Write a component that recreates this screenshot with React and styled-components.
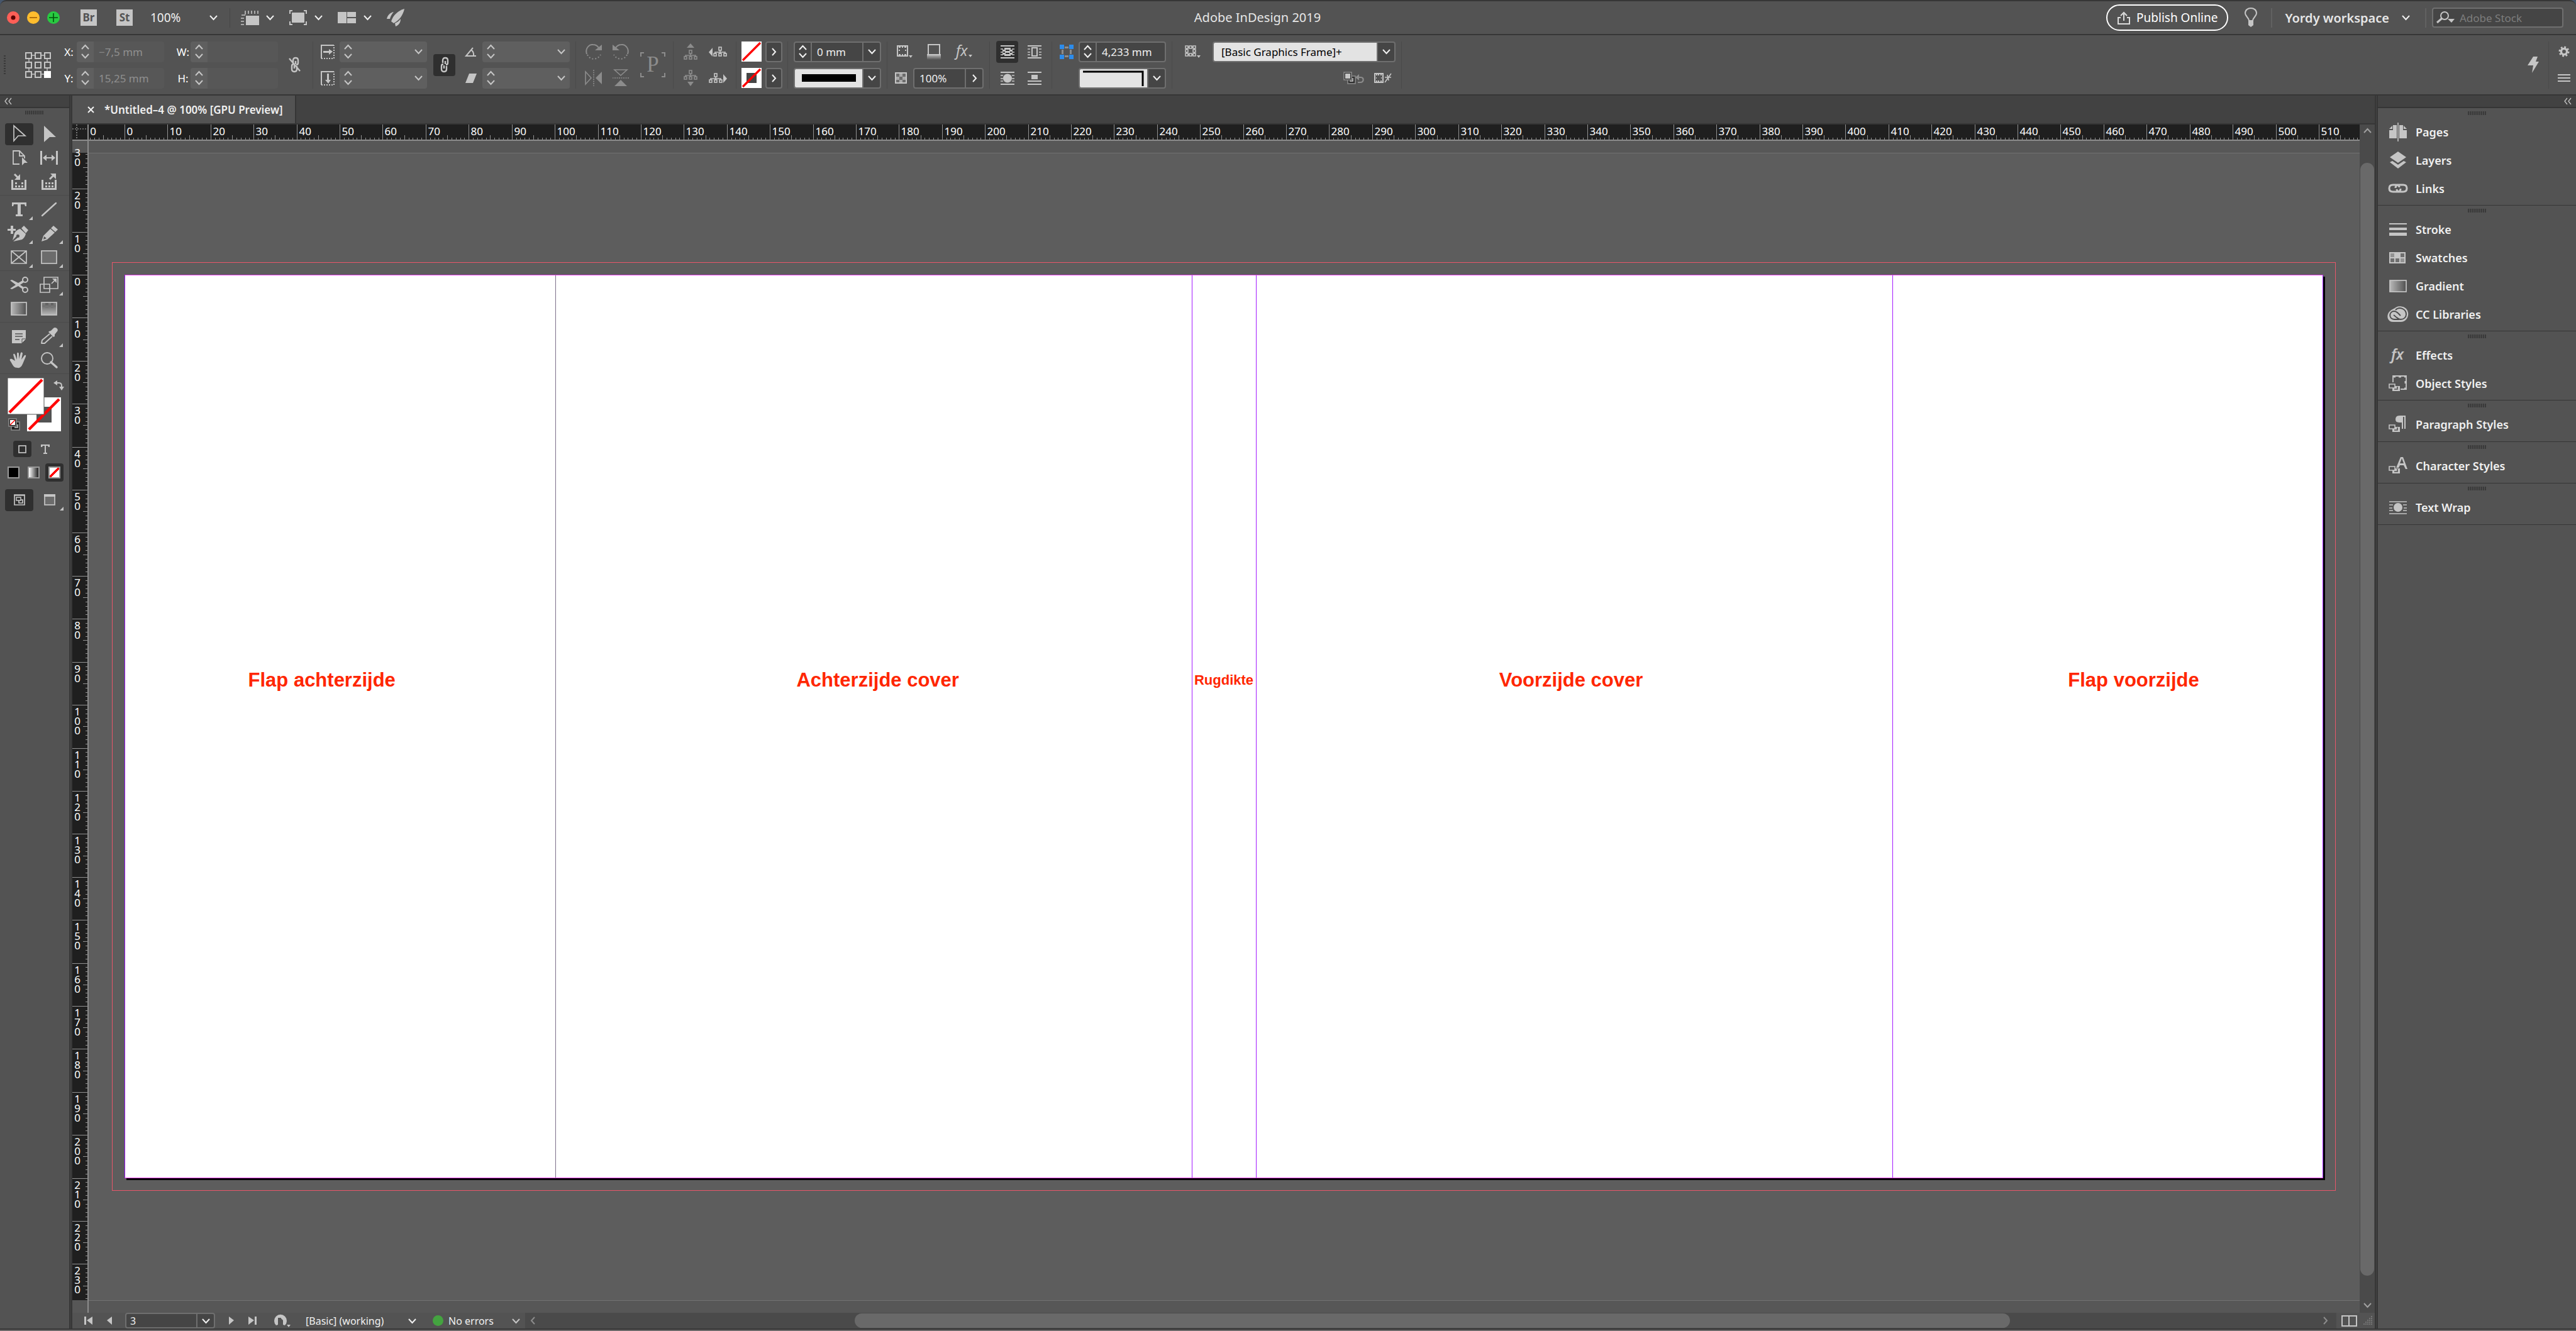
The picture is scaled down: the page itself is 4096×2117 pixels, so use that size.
import styled, { createGlobalStyle, css } from 'styled-components';

const PX_PER_MM = 6.841;
const ICON = '#c5c5c5';
const MUTED = '#8c8c8c';

const GlobalStyle = createGlobalStyle`
   * {
      box-sizing: border-box;
   }

   body {
      margin: 0;
      background: #46566b;
      color: #f0f0f0;
      font-family: 'Noto Sans', 'Open Sans', sans-serif;
      font-size: 17px;
   }

   button,
   input,
   select {
      margin: 0;
      padding: 0;
      border: 0;
      background: none;
      color: inherit;
      font: inherit;
      outline: none;
      appearance: none;
   }

   svg {
      display: block;
      flex: none;
      overflow: visible;
   }
`;

// Icons
const Icon = ({ w, h, color = ICON, children }) => (
   <svg width={w} height={h} viewBox={`0 0 ${w} ${h}`} fill={color} aria-hidden="true">
      {children}
   </svg>
);

const Chevron = ({ dir = 'down', color = '#f0f0f0' }) => {
   const paths = {
      down: 'M1 1 L6.5 7 L12 1',
      up: 'M1 7 L6.5 1 L12 7',
      right: 'M4 0 L9 5.5 L4 11',
      left: 'M9 0 L4 5.5 L9 11',
   };
   const tall = dir === 'left' || dir === 'right';
   return (
      <svg
         width="13"
         height={tall ? 11 : 8}
         viewBox={`0 0 13 ${tall ? 11 : 8}`}
         fill="none"
         stroke={color}
         strokeWidth="2"
         aria-hidden="true"
      >
         <path d={paths[dir]} />
      </svg>
   );
};

const Collapse = () => (
   <Icon w={12} h={12}>
      <path d="M5 1 L1 6 L5 11 M11 1 L7 6 L11 11" fill="none" stroke={ICON} strokeWidth="1.3" />
   </Icon>
);

const RulerViewIcon = () => (
   <Icon w={30} h={24}>
      <rect x="9" y="9" width="21" height="15" />
      <path d="M8 1v6M13 1v5M18 1v5M23 1v5M28 1v5M2 8h6M1 13h5M1 18h5M1 23h5" stroke={ICON} strokeWidth="1.6" />
   </Icon>
);

const ScreenModeIcon = () => (
   <Icon w={28} h={24}>
      <rect x="4" y="4" width="20" height="16" />
      <path d="M1 6V1h4M23 1h4v5M27 18v5h-4M5 23H1v-5" fill="none" stroke={ICON} strokeWidth="2" />
   </Icon>
);

const ArrangeIcon = () => (
   <Icon w={29} h={18}>
      <path d="M0 0h14v18H0zM15 0h14v8H15zM15 10h14v8H15z" />
   </Icon>
);

const RocketIcon = () => (
   <Icon w={28} h={28}>
      <path d="M28 0C18 3 10 10 7 20l4 3C20 18 26 10 28 0z" />
      <path d="M11 5C5 6 1 11 0 16h5c1-4 3-8 6-11zM22 16c0 6-3 10-8 12l-1-5c4-2 7-4 9-7z" />
   </Icon>
);

const ShareIcon = () => (
   <Icon w={20} h={21}>
      <path d="M5 10H1v10h18V10h-4" fill="none" stroke="#dcdcdc" strokeWidth="2" />
      <path d="M10 15V4M5 7l5-5 5 5" fill="none" stroke="#dcdcdc" strokeWidth="2" />
   </Icon>
);

const BulbIcon = () => (
   <Icon w={22} h={32}>
      <path d="M8 21c0-5-6-7-6-12C2 4 6 1 11 1s9 3 9 8c0 5-6 7-6 12z" fill="none" stroke={ICON} strokeWidth="2" />
      <path d="M7 21h8v7l-4 3-4-3z" />
   </Icon>
);

const SearchIcon = () => (
   <Icon w={30} h={20}>
      <circle cx="13" cy="7" r="6" fill="none" stroke={ICON} strokeWidth="2" />
      <path d="M9 11L1 18" stroke={ICON} strokeWidth="3" />
      <path d="M18 12h11l-5 6z" />
   </Icon>
);

const RefPointIcon = () => (
   <Icon w={41} h={41}>
      <path d="M6 5h29M6 35h29M6 5v30M35 5v30" stroke={ICON} strokeWidth="1.4" />
      {[0, 15, 30].map((y) =>
         [0, 15, 30].map((x) => (
            <rect
               key={`${x}-${y}`}
               x={x + 1}
               y={y + 1}
               width="9"
               height="9"
               fill={x === 30 && y === 30 ? '#fff' : '#535353'}
               stroke={x === 30 && y === 30 ? '#fff' : ICON}
               strokeWidth="2"
            />
         ))
      )}
   </Icon>
);

const LinkIcon = ({ broken }) => (
   <Icon w={20} h={24}>
      <g fill="none" stroke={ICON} strokeWidth="2.4">
         <path d="M7 9V5q0-4 4-4t4 4v4q0 3-3 3M13 14v5q0 4-4 4t-4-4v-5q0-3 3-3" />
         <path d="M11 6v5M9 13v5" />
         {broken && <path d="M1 2l17 20" />}
      </g>
   </Icon>
);

const ScaleIcon = ({ vertical }) => (
   <Icon w={22} h={23}>
      <path d="M21 1H1v21" fill="none" stroke={ICON} strokeWidth="2" />
      <path d="M1 22h20V1" fill="none" stroke={ICON} strokeWidth="2" strokeDasharray="2 2" />
      {vertical ? (
         <path d="M10 4h3v10h3l-4 6-5-6h3z" />
      ) : (
         <path d="M4 10v3h9v3l6-5-6-4v3z" />
      )}
   </Icon>
);

const AngleIcon = () => (
   <Icon w={19} h={15}>
      <path d="M13 1L2 14h16M10 4q5 4 4 10" fill="none" stroke={ICON} strokeWidth="2" />
   </Icon>
);

const ShearIcon = () => (
   <Icon w={19} h={15}>
      <path d="M7 0h12l-6 15H1z" />
   </Icon>
);

const RotateIcon = ({ ccw }) => (
   <Icon w={26} h={26} color={MUTED}>
      <g transform={ccw ? 'translate(26 0) scale(-1 1)' : undefined}>
         <path d="M2 17C-1 8 6 1 12 2c4 0 7 2 9 5" fill="none" stroke={MUTED} strokeWidth="2" />
         <path d="M26 2v9H15z" />
         <path d="M3 18c4 9 16 9 21 0" fill="none" stroke={MUTED} strokeWidth="2" strokeDasharray="2 3" />
      </g>
   </Icon>
);

const FlipIcon = ({ vertical }) => (
   <Icon w={28} h={28} color={MUTED}>
      <g transform={vertical ? 'rotate(90 14 14)' : undefined}>
         <path d="M1 4v20l9-10z" fill="none" stroke={MUTED} strokeWidth="1.6" />
         <path d="M27 4v20L17 14z" />
         <path d="M14 1v26" stroke={MUTED} strokeWidth="1.6" strokeDasharray="2 1.5" />
      </g>
   </Icon>
);

const FrameLetterIcon = () => (
   <Icon w={40} h={40} color={MUTED}>
      <path d="M1 7V1h5M34 1h5v6M39 33v6h-5M6 39H1v-6" fill="none" stroke={MUTED} strokeWidth="2" />
      <text x="20" y="31" textAnchor="middle" fontFamily="Liberation Serif, serif" fontSize="35">
         P
      </text>
   </Icon>
);

const TreeShape = ({ x = 0, y = 0, color }) => (
   <g transform={`translate(${x} ${y})`} fill="none" stroke={color} strokeWidth="1.6">
      <rect x="9" y="1" width="4" height="5" />
      <path d="M11 6v6M3 12V9h16v3" />
      <rect x="1" y="11" width="4" height="4" />
      <rect x="9" y="11" width="4" height="4" />
      <rect x="17" y="11" width="4" height="4" />
   </g>
);

const SelectContentIcon = ({ dir }) => {
   if (dir === 'up' || dir === 'down') {
      const up = dir === 'up';
      return (
         <Icon w={22} h={26} color={MUTED}>
            <TreeShape y={up ? 10 : 0} color={MUTED} />
            <path d={up ? 'M11 0l6 7H5z' : 'M11 26l5-7H6z'} />
         </Icon>
      );
   }
   const left = dir === 'left';
   return (
      <Icon w={29} h={17}>
         <TreeShape x={left ? 7 : 0} color={ICON} />
         <path d={left ? 'M0 9l6-7v14z' : 'M29 9l-6-7v14z'} />
      </Icon>
   );
};

const NoneSwatch = ({ size, hollow }) => (
   <Icon w={size} h={size} color="#fff">
      <rect width={size} height={size} />
      {hollow && <rect x="25%" y="25%" width="50%" height="50%" fill="#454545" />}
      <path d={`M2 ${size - 2}L${size - 2} 2`} stroke="#f00" strokeWidth="3.4" />
   </Icon>
);

const FrameIcon = () => (
   <Icon w={25} h={20}>
      <rect x="1" y="1" width="16" height="16" fill="none" stroke={ICON} strokeWidth="2" />
      <path d="M3 3h3M12 3h3M3 15h3M12 15h3M3 8h2M13 8h2M8 3h2M8 15h2" stroke={ICON} strokeWidth="2" />
      <path d="M19 16h6l-3 4z" />
   </Icon>
);

const ShadowIcon = () => (
   <Icon w={24} h={25}>
      <defs>
         <linearGradient id="shade" x1="0" y1="0" x2="0" y2="1">
            <stop offset="0" stopColor="#c5c5c5" />
            <stop offset="1" stopColor="#535353" />
         </linearGradient>
      </defs>
      <rect x="1" y="16" width="22" height="9" fill="url(#shade)" />
      <rect x="3" y="1" width="18" height="16" fill="#535353" stroke={ICON} strokeWidth="2" />
   </Icon>
);

const FxIcon = ({ menu }) => (
   <Icon w={28} h={26}>
      <text x="1" y="20" fontStyle="italic" fontSize="23" fontFamily="Noto Sans, sans-serif">
         fx
      </text>
      {menu && <path d="M21 18h6l-3 4z" />}
   </Icon>
);

const OpacityIcon = () => (
   <Icon w={19} h={18}>
      <rect x="1" y="1" width="17" height="16" fill="#6c6c6c" stroke={ICON} strokeWidth="2" />
      <path d="M7 2h5v5H7zM2 7h5v5H2zM12 7h5v5h-5zM7 12h5v4H7z" fill="#a9a9a9" />
   </Icon>
);

const WrapIcon = ({ kind }) => (
   <Icon w={28} h={21}>
      <path d="M3 1h22M3 20h22" stroke={ICON} strokeWidth="2" />
      {kind !== 'jump' && <path d="M3 6h4M21 6h4M3 11h4M21 11h4M3 15h4M21 15h4" stroke={ICON} strokeWidth="1.6" />}
      {kind === 'none' && <path d="M9 4h10v3H9zM6 7h5v3H6zM17 7h5v3h-5zM10 9h8v3h-8zM6 12h5v3H6zM17 12h5v3h-5zM9 14h10v3H9z" />}
      {kind === 'box' && <rect x="10" y="4" width="8" height="13" fill="none" stroke={ICON} strokeWidth="2" />}
      {kind === 'shape' && <ellipse cx="14" cy="10.5" rx="7" ry="7" />}
      {kind === 'jump' && <path d="M9 5h10v7H9zM3 14h22v2H3z" />}
   </Icon>
);

const CornerOptionsIcon = () => (
   <Icon w={22} h={23}>
      <path d="M8 3h6v3H8zM8 17h6v3H8zM3 8h3v7H3zM16 8h3v7h-3z" fill={MUTED} />
      <path d="M0 0h7v7H0zM15 0h7v7h-7zM0 16h7v7H0zM15 16h7v7h-7z" fill="#2d8ceb" />
   </Icon>
);

const ObjectStyleIcon = () => (
   <Icon w={25} h={20}>
      <rect x="3" y="3" width="12" height="12" fill="none" stroke={ICON} strokeWidth="2" />
      {[1, 7, 13].map((x) =>
         [1, 7, 13].map(
            (y) =>
               (x !== 7 || y !== 7) && (
                  <rect key={`${x}-${y}`} x={x} y={y} width="4" height="4" fill="#535353" stroke={ICON} strokeWidth="1.5" />
               )
         )
      )}
      <path d="M19 16h6l-3 4z" />
   </Icon>
);

const ClearOverridesIcon = () => (
   <Icon w={33} h={20}>
      <path d="M7 7h12v12H7z" fill="#2f2f2f" stroke={MUTED} strokeWidth="1.5" />
      <path d="M1 1h12v12H1z" fill="#2f2f2f" stroke={MUTED} strokeWidth="1.5" />
      <path d="M3 3h8v8H3z" />
      <path d="M15 10v5h-5" fill="none" stroke={ICON} strokeWidth="1.6" />
      <path d="M23 9h5c5 0 5 8-1 8h-4" fill="none" stroke={MUTED} strokeWidth="2.2" />
      <path d="M19 9l6-5v10z" fill={MUTED} />
   </Icon>
);

const RedefineIcon = () => (
   <Icon w={28} h={16}>
      <rect x="1" y="1" width="13" height="14" fill="none" stroke={ICON} strokeWidth="2" />
      <path d="M3 3h2M10 3h2M3 13h2M10 13h2M6 3h2M6 13h2M3 8h1M11 8h1" stroke={ICON} strokeWidth="2" />
      <path d="M17 15L27 1M17 7h10M21 3l2 9" stroke={ICON} strokeWidth="1.6" />
   </Icon>
);

const GearIcon = () => (
   <Icon w={18} h={18}>
      <circle cx="9" cy="9" r="4.6" fill="none" stroke={ICON} strokeWidth="3.4" />
      <circle cx="9" cy="9" r="7" fill="none" stroke={ICON} strokeWidth="3" strokeDasharray="2.75 2.75" />
   </Icon>
);

// Toolbox icons share a 30x28 box
const toolIcons = {
   selection: <path d="M7 1v24l7-8h11z" fill="none" stroke={ICON} strokeWidth="1.7" />,
   direct: <path d="M7 1v26l9-8h10z" />,
   page: (
      <>
         <path d="M16 24H6V3h10l8 8v4M16 3v8h8" fill="none" stroke={ICON} strokeWidth="1.8" />
         <path d="M20 13v13l4-4h5z" />
      </>
   ),
   gap: (
      <>
         <path d="M1 3h3v22H1zM26 3h3v22h-3z" />
         <path d="M5 14l6-5v4h8V9l6 5-6 5v-4h-8v4z" />
      </>
   ),
   collect: (
      <>
         <path d="M3 11h3v13h18V11h3v16H3z" />
         <path d="M9 15h3v3H9zM19 15h3v3h-3zM9 20h3v3H9zM14 20h3v3h-3zM19 20h3v3h-3z" />
         <path d="M8 2l6 6" stroke={ICON} strokeWidth="3" />
         <path d="M17 2v9H8z" />
      </>
   ),
   place: (
      <>
         <path d="M3 11h3v13h18V11h3v16H3z" />
         <path d="M9 15h3v3H9zM14 15h3v3h-3zM19 15h3v3h-3zM9 20h3v3H9zM14 20h3v3h-3zM19 20h3v3h-3z" />
         <path d="M16 10l6-6" stroke={ICON} strokeWidth="3" />
         <path d="M17 1h9v9z" />
      </>
   ),
   type: <path d="M4 3h23v6h-2l-1-3h-6v16h3v3H10v-3h3V6H7L6 9H4z" />,
   line: <path d="M4 24L26 4" stroke={ICON} strokeWidth="2.4" strokeLinecap="round" />,
   pen: (
      <>
         <path d="M-3 7h5V2h4v5h4v3H6v5H2v-5h-5z" />
         <path d="M19 6l4-4 7 7-4 5z" />
         <path d="M17 7l9 8c-1 4-3 7-6 9L6 27l7-6a2.500 2.500 0 1 0-2-2l-6 6 3-11c2-4 5-6 9-7z" />
      </>
   ),
   pencil: (
      <path d="M22 2l7 6-4 4-7-6zM17 7l7 6L12 24l-9 3 3-9zM7 19l-1 5 5-2z" fillRule="evenodd" />
   ),
   frame: (
      <path d="M3 4h24v20H3zM3 4l24 20M27 4L3 24" fill="none" stroke={ICON} strokeWidth="1.7" />
   ),
   rect: <rect x="3" y="4" width="24" height="20" fill="#6c6c6c" stroke={ICON} strokeWidth="1.7" />,
   scissors: (
      <>
         <path d="M1 7l3-1 10 5 7-4 2 3-6 4 6 4-2 3-7-5-10 5-3-1 9-6z" />
         <circle cx="25" cy="6" r="4" fill="none" stroke={ICON} strokeWidth="2" />
         <circle cx="25" cy="22" r="4" fill="none" stroke={ICON} strokeWidth="2" />
      </>
   ),
   transform: (
      <>
         <path d="M7 2h22v18H7zM1 13h15v13H1z" fill="none" stroke={ICON} strokeWidth="1.7" />
         <path d="M19 12l6-6" stroke={ICON} strokeWidth="1.7" />
         <path d="M20 4h7v7z" />
      </>
   ),
   gradient: <rect x="3" y="4" width="24" height="20" fill="url(#fade)" stroke={ICON} strokeWidth="1.7" />,
   feather: (
      <>
         <rect x="3" y="4" width="24" height="20" fill="url(#fadeDown)" stroke={ICON} strokeWidth="1.7" />
         <path d="M4 5h5v4H4zM14 5h4v4h-4zM22 5h4v4h-4zM9 9h5v4H9zM18 9h4v4h-4z" fill="#767676" />
      </>
   ),
   note: (
      <>
         <path d="M4 4h22v14l-6 7H4z" />
         <path d="M9 10h12M9 14h12M9 19h7" stroke="#535353" strokeWidth="1.6" />
         <path d="M20 18h7l-7 7z" stroke="#535353" strokeWidth="1" />
      </>
   ),
   eyedropper: (
      <>
         <path d="M15 6l3-1 4-4c3-3 9 2 6 5l-4 5v3l-2 1-8-8z" />
         <path d="M16 10L4 20l-1 5h5l12-11" fill="none" stroke={ICON} strokeWidth="1.9" strokeLinejoin="round" />
      </>
   ),
   hand: (
      <path d="M9 15L6 5q1-3 3 0l3 8V3q1-3 3 0v9l3-10q2-2 3 1l-2 10 5-7q3-1 2 2l-5 12q-3 7-8 6c-6 0-7-3-11-10-3-4 0-5 2-4z" />
   ),
   zoom: (
      <>
         <circle cx="12" cy="11" r="9" fill="none" stroke={ICON} strokeWidth="1.9" />
         <path d="M18 17l9 8" stroke={ICON} strokeWidth="3.4" strokeLinecap="round" />
      </>
   ),
};

const toolGroups = [
   [['selection', 'Selection', 0, 1], ['direct', 'Direct Selection'], ['page', 'Page'], ['gap', 'Gap'], ['collect', 'Content Collector'], ['place', 'Content Placer']],
   [['type', 'Type', 1], ['line', 'Line'], ['pen', 'Pen', 1], ['pencil', 'Pencil', 1], ['frame', 'Rectangle Frame', 1], ['rect', 'Rectangle', 1]],
   [['scissors', 'Scissors'], ['transform', 'Free Transform', 1], ['gradient', 'Gradient Swatch'], ['feather', 'Gradient Feather']],
   [['note', 'Note'], ['eyedropper', 'Eyedropper', 1], ['hand', 'Hand'], ['zoom', 'Zoom']],
];

// Panel icons share a 34x32 box
const StyleBadge = () => (
   <>
      <path d="M8 20h12v8H8z" fill={ICON} />
      <path d="M3 17h9v6H3z" fill="#535353" stroke={ICON} strokeWidth="1.6" />
      <path d="M16 21v4h-5" fill="none" stroke="#535353" strokeWidth="1.6" />
   </>
);

const panelIcons = {
   Pages: (
      <>
         <path d="M3 13h6V5h6v21H3zM19 5h6v8h6v13H19zM3 11l5-5v5zM31 11l-5-5v5z" />
         <path d="M17 1v30" stroke={ICON} strokeWidth="1.6" />
      </>
   ),
   Layers: <path d="M17 2l13 9-13 9-13-9zM4 19l4-2 9 6 9-6 4 2-13 10z" />,
   Links: (
      <g fill="none" stroke={ICON} strokeWidth="3">
         <path d="M21 16q0 5-5 5H9q-6 0-6-5.500T9 10h5q5 0 5 4" />
         <path d="M13 15q0-5 5-5h7q6 0 6 5.500T25 21h-5q-5 0-5-4" />
      </g>
   ),
   Stroke: <path d="M3 6h28v2H3zM3 13h28v4H3zM3 21h28v5H3z" />,
   Swatches: (
      <>
         <rect x="3" y="7" width="26" height="18" />
         <path d="M5 9h6v6H5zM21 17h6v6h-6z" fill="#929292" />
         <path d="M21 9h6v6h-6zM5 17h6v6H5zM13 17h6v6h-6z" fill="#6f6f6f" />
      </>
   ),
   Gradient: <rect x="4" y="7" width="26" height="18" fill="url(#fade)" stroke={ICON} strokeWidth="1.7" />,
   'CC Libraries': (
      <>
         <path d="M12 6C16 2 28 2 32 10s-2 19-12 18H9C0 28-2 18 3 12q4-4 9-6z" />
         <g fill="none" stroke="#4a4a4a" strokeWidth="1.9">
            <path d="M19 24h-8c-9 0-9-13 0-13 4 0 6 3 10 7" />
            <path d="M13 9c6-6 17-2 17 7 0 5-4 8-9 8-4 0-7-4-11-7" />
         </g>
      </>
   ),
   'Object Styles': (
      <>
         <path d="M9 14V4h21v21h-9" fill="none" stroke={ICON} strokeWidth="1.8" />
         <path d="M10 5h3M18 5h4M27 5h2M29 12v4M27 24h2" stroke={ICON} strokeWidth="3" />
         <StyleBadge />
      </>
   ),
   'Paragraph Styles': (
      <>
         <path d="M13 8q0-6 7-6h9v21h-2V4h-2v19h-2V13h-4q-6 0-6-5z" />
         <StyleBadge />
      </>
   ),
   'Character Styles': (
      <>
         <path d="M14 19l7-17h4l7 19h-3l-3-6h-6l-2 4zM20 12h6l-3-8z" fillRule="evenodd" />
         <StyleBadge />
      </>
   ),
   'Text Wrap': (
      <>
         <path d="M3 7h28M3 26h28M3 12h6M25 12h6M3 17h5M26 17h5M3 21h6M25 21h6" stroke={ICON} strokeWidth="1.6" />
         <circle cx="17" cy="16" r="7" />
      </>
   ),
   Effects: (
      <text x="6" y="23" fontStyle="italic" fontSize="23" fontFamily="Noto Sans, sans-serif">
         fx
      </text>
   ),
};

const panelGroups = [
   ['Pages', 'Layers', 'Links'],
   ['Stroke', 'Swatches', 'Gradient', 'CC Libraries'],
   ['Effects', 'Object Styles'],
   ['Paragraph Styles'],
   ['Character Styles'],
   ['Text Wrap'],
];

const coverTexts = [
   { text: 'Flap achterzijde', at: 8.95 },
   { text: 'Achterzijde cover', at: 34.25 },
   { text: 'Rugdikte', at: 50, small: true },
   { text: 'Voorzijde cover', at: 65.8 },
   { text: 'Flap voorzijde', at: 91.4 },
];

// Rulers
const range = (from, to, step = 1) =>
   Array.from({ length: Math.floor((to - from) / step) + 1 }, (_, i) => from + i * step);

const tickLength = (mm) => (mm % 10 === 0 ? 24 : mm % 5 === 0 ? 7 : 3);

const HorizontalRuler = () => {
   const x = (mm) => Math.round(57 + mm * PX_PER_MM) + 0.5;
   const ticks = range(-8, 519).map((mm) => `M${x(mm)} 24v-${tickLength(mm)}`).join('');
   return (
      <HRuler>
         <svg width="100%" height="24">
            <path d={ticks} stroke="#929292" />
            {range(-10, 510, 10).map((mm) => (
               <text key={mm} x={x(mm) + 3} y="17" fill="#fff">
                  {Math.abs(mm)}
               </text>
            ))}
         </svg>
      </HRuler>
   );
};

const VerticalRuler = () => {
   const y = (mm) => Math.round(213 + mm * PX_PER_MM) + 0.5;
   const ticks = range(-28, 238).map((mm) => `M24 ${y(mm)}h-${tickLength(mm)}`).join('');
   return (
      <VRuler>
         <svg width="24" height="100%">
            <path d={ticks} stroke="#929292" />
            {range(-30, 230, 10).map((mm) =>
               [...String(Math.abs(mm))].map((digit, i) => (
                  <text key={`${mm}-${i}`} x="8" y={y(mm) + 16 + i * 15} fill="#fff" textAnchor="middle">
                     {digit}
                  </text>
               ))
            )}
         </svg>
      </VRuler>
   );
};

// Controls
const NumberField = ({ id, label, value = '', tone = 'flat', spin = true, drop }) => {
   const color = tone === 'live' ? '#f0f0f0' : ICON;
   return (
      <Field $tone={tone}>
         {spin && (
            <Spinner $tone={tone}>
               <button aria-label={`${label} up`}><Chevron dir="up" color={color} /></button>
               <button aria-label={`${label} down`}><Chevron color={color} /></button>
            </Spinner>
         )}
         <FieldInput id={id} aria-label={label} defaultValue={value} $tone={tone} />
         {drop && (
            <Drop $tone={tone} aria-label={`${label} options`}>
               <Chevron dir={drop} color={color} />
            </Drop>
         )}
      </Field>
   );
};

const TitleBarView = () => (
   <TitleBar>
      <Side>
         <Lights>
            <Light $color="#ff5f57" aria-label="Close">
               <Icon w={20} h={20} color="#5c0000"><circle cx="10" cy="10" r="3.5" /></Icon>
            </Light>
            <Light $color="#ffbd2e" aria-label="Minimise">
               <Icon w={20} h={20}><path d="M4 10h12" stroke="#985700" strokeWidth="1.6" /></Icon>
            </Light>
            <Light $color="#28ca41" aria-label="Full screen">
               <Icon w={20} h={20}><path d="M3 10h14M10 3v14" stroke="#00520a" strokeWidth="1.6" /></Icon>
            </Light>
         </Lights>
         <AppBadge>Br</AppBadge>
         <AppBadge>St</AppBadge>
         <ZoomSelect>
            <select aria-label="Zoom level"><option>100%</option></select>
            <Chevron />
         </ZoomSelect>
         <TitleRule />
         <MenuButton aria-label="View options" $w={54}><RulerViewIcon /><Chevron /></MenuButton>
         <MenuButton aria-label="Screen mode" $w={53}><ScreenModeIcon /><Chevron /></MenuButton>
         <MenuButton aria-label="Arrange documents" $w={54}><ArrangeIcon /><Chevron /></MenuButton>
         <MenuButton aria-label="GPU performance" $w={28}><RocketIcon /></MenuButton>
      </Side>
      <AppTitle>Adobe InDesign 2019</AppTitle>
      <Side $end>
         <Publish><ShareIcon />Publish Online</Publish>
         <MenuButton aria-label="Learn" $w={22} $mr={21}><BulbIcon /></MenuButton>
         <TitleRule $light />
         <Workspace>Yordy workspace<Chevron /></Workspace>
         <TitleRule $light />
         <StockSearch>
            <SearchIcon />
            <input aria-label="Search Adobe Stock" placeholder="Adobe Stock" />
         </StockSearch>
      </Side>
   </TitleBar>
);

const ControlBarView = () => (
   <ControlBar>
      <Group $end={18}>
         <Stack $ml={6} $w={3} $solo><DragDots /></Stack>
         <Stack $ml={31} $w={41} $solo><RefPointIcon /></Stack>
         <Stack $ml={20} $w={17}>
            <label htmlFor="pos-x">X:</label>
            <label htmlFor="pos-y">Y:</label>
         </Stack>
         <Stack $ml={4} $w={139}>
            <NumberField id="pos-x" label="X position" value="−7,5 mm" tone="dim" />
            <NumberField id="pos-y" label="Y position" value="15,25 mm" tone="dim" />
         </Stack>
         <Stack $ml={20} $w={20}>
            <label htmlFor="size-w">W:</label>
            <label htmlFor="size-h">H:</label>
         </Stack>
         <Stack $ml={2} $w={139}>
            <NumberField id="size-w" label="Width" tone="dim" />
            <NumberField id="size-h" label="Height" tone="dim" />
         </Stack>
         <Stack $ml={17} $w={20} $solo><LinkIcon broken /></Stack>
      </Group>
      <Group $end={9}>
         <Stack $ml={12} $w={22}><ScaleIcon /><ScaleIcon vertical /></Stack>
         <Stack $ml={8} $w={139}>
            <NumberField label="Scale X" drop="down" />
            <NumberField label="Scale Y" drop="down" />
         </Stack>
         <Stack $ml={10} $w={35} $solo>
            <Toggle aria-label="Constrain scaling"><LinkIcon /></Toggle>
         </Stack>
         <Stack $ml={15} $w={19}><AngleIcon /><ShearIcon /></Stack>
         <Stack $ml={9} $w={139}>
            <NumberField label="Rotation" drop="down" />
            <NumberField label="Shear" drop="down" />
         </Stack>
      </Group>
      <Group $end={12}>
         <Stack $ml={14} $w={28}><RotateIcon /><FlipIcon /></Stack>
         <Stack $ml={15} $w={28}><RotateIcon ccw /><FlipIcon vertical /></Stack>
         <Stack $ml={17} $w={40} $solo><FrameLetterIcon /></Stack>
      </Group>
      <Group $end={14}>
         <Stack $ml={16} $w={22}><SelectContentIcon dir="up" /><SelectContentIcon dir="down" /></Stack>
         <Stack $ml={18} $w={29}><SelectContentIcon dir="left" /><SelectContentIcon dir="right" /></Stack>
      </Group>
      <Group $end={8}>
         <Stack $ml={8} $w={32}><NoneSwatch size={32} /><NoneSwatch size={32} hollow /></Stack>
         <Stack $ml={6} $w={27}>
            <Field as="button" $tone="live" $center aria-label="Fill colour"><Chevron dir="right" /></Field>
            <Field as="button" $tone="live" $center aria-label="Stroke colour"><Chevron dir="right" /></Field>
         </Stack>
      </Group>
      <Group $end={9}>
         <Stack $ml={9} $w={139}>
            <NumberField label="Stroke weight" value="0 mm" tone="live" drop="down" />
            <Field $tone="live">
               <Preview><Icon w={86} h={12} color="#000"><rect width="86" height="12" /></Icon></Preview>
               <Drop $tone="live" aria-label="Stroke type"><Chevron /></Drop>
            </Field>
         </Stack>
      </Group>
      <Group $end={9}>
         <Stack $ml={12} $w={141}>
            <Inline $gap={22} $pl={3}><FrameIcon /><ShadowIcon /><FxIcon menu /></Inline>
            <Inline $gap={10}>
               <OpacityIcon />
               <NumberField label="Opacity" value="100%" tone="live" spin={false} drop="right" />
            </Inline>
         </Stack>
      </Group>
      <Group $end={12}>
         <Stack $ml={10} $w={35}>
            <Toggle aria-label="No text wrap"><WrapIcon kind="none" /></Toggle>
            <WrapIcon kind="shape" />
         </Stack>
         <Stack $ml={11} $w={30}><WrapIcon kind="box" /><WrapIcon kind="jump" /></Stack>
      </Group>
      <Group $end={9}>
         <Stack $ml={12} $w={22}><CornerOptionsIcon /></Stack>
         <Stack $ml={8} $w={139}>
            <NumberField label="Corner size" value="4,233 mm" tone="live" />
            <Field $tone="live">
               <Preview>
                  <Icon w={98} h={26}><path d="M0 3h95v23" fill="none" stroke="#000" strokeWidth="3" /></Icon>
               </Preview>
               <Drop $tone="live" aria-label="Corner shape"><Chevron /></Drop>
            </Field>
         </Stack>
      </Group>
      <Group $end={9}>
         <Stack $ml={20} $w={25}><ObjectStyleIcon /></Stack>
         <Stack $ml={19} $w={291}>
            <Field $tone="live">
               <StyleSelect aria-label="Object style"><option>[Basic Graphics Frame]+</option></StyleSelect>
               <Drop as="span" $tone="live"><Chevron /></Drop>
            </Field>
            <Inline $gap={16} $end><ClearOverridesIcon /><RedefineIcon /></Inline>
         </Stack>
      </Group>
      <Group $end={15} $last>
         <Icon w={18} h={26}><path d="M9 0h7l-3 8h5L7 26l2-12H0z" /></Icon>
      </Group>
      <Stack $ml={14} $w={20}>
         <GearIcon />
         <Icon w={20} h={13}><path d="M0 0h20v2H0zM0 5h20v2H0zM0 10h20v2H0z" /></Icon>
      </Stack>
   </ControlBar>
);

const ToolBoxView = () => (
   <ToolBox>
      <PanelHeader><Collapse /></PanelHeader>
      <ToolGrip><Grip /></ToolGrip>
      {toolGroups.map((tools) => (
         <ToolGroup key={tools[0][0]}>
            {tools.map(([name, label, menu, active]) => (
               <Tool key={name} aria-label={label} $active={active} $menu={menu}>
                  <Icon w={30} h={28}>{toolIcons[name]}</Icon>
               </Tool>
            ))}
         </ToolGroup>
      ))}
      <Swatches>
         <Icon w={94} h={86}>
            <path d="M31 31h54v54H31zM46 46v25h24V46z" fill="#fff" fillRule="evenodd" />
            <path d="M34 82L82 34" stroke="#f00" strokeWidth="4.4" />
            <path d="M0 0h58v58H0z" fill="#fff" stroke="#535353" />
            <path d="M3 55L55 3" stroke="#f00" strokeWidth="4.4" />
            <path d="M77 8h5q4 0 4 5v3" fill="none" stroke={ICON} strokeWidth="2" />
            <path d="M73 8l6-4v8zM82 14h8l-4 6z" />
            <path d="M6 70h13v13H6z" fill="#1f1f1f" stroke={MUTED} strokeWidth="1.5" />
            <path d="M2 65h12v12H2z" fill="#1f1f1f" stroke={MUTED} strokeWidth="1.5" />
            <path d="M4 67h8v8H4z" fill="#fff" />
            <path d="M4 75l8-8" stroke="#f00" strokeWidth="1.5" />
            <path d="M16 74v5h-5" fill="none" stroke={ICON} strokeWidth="1.6" />
         </Icon>
      </Swatches>
      <ModeRow $h={36} $gap={12} $pl={21}>
         <Mode $active $w={29} $h={26} aria-label="Formatting affects container">
            <Icon w={13} h={13}><rect x="1" y="1" width="11" height="11" fill="none" stroke={ICON} strokeWidth="1.7" /></Icon>
         </Mode>
         <Mode $w={20} $h={26} aria-label="Formatting affects text">
            <Icon w={14} h={15}><path d="M0 0h14v4h-2l-1-2H8v11h2v2H4v-2h2V2H3L2 4H0z" /></Icon>
         </Mode>
      </ModeRow>
      <ModeRow $h={38} $gap={9} $pl={12}>
         <ColorChip $fill="#000" aria-label="Apply color" />
         <ColorChip $fill="linear-gradient(90deg, #fff, #222)" $ml={4} aria-label="Apply gradient" />
         <Mode $active $w={29} $h={29} aria-label="Apply none">
            <ColorChip as="span" $fill="linear-gradient(135deg, #fff 42%, #f00 42%, #f00 58%, #fff 58%)" />
         </Mode>
      </ModeRow>
      <ModeRow $h={50} $gap={3} $pl={8}>
         <Mode $active $w={45} $h={35} aria-label="Normal view">
            <Icon w={18} h={18}>
               <path d="M1 1h16v16H1z" fill="none" stroke={ICON} strokeWidth="1.7" />
               <path d="M1 2h16M8 9h6v5H8z" fill="none" stroke={ICON} strokeWidth="1.7" />
               <path d="M4 5h7v5H4z" fill="#2f2f2f" stroke={ICON} strokeWidth="1.5" />
            </Icon>
         </Mode>
         <Mode $menu $w={46} $h={35} aria-label="Screen mode">
            <Icon w={18} h={18}>
               <rect x="1" y="1" width="16" height="16" fill="#6c6c6c" stroke={ICON} strokeWidth="1.7" />
               <path d="M0 0h18v4H0z" />
            </Icon>
         </Mode>
      </ModeRow>
   </ToolBox>
);

const StatusBarView = () => (
   <StatusBar>
      <PageNav>
         <button aria-label="First page"><Icon w={13} h={13}><path d="M0 0h3v13H0zM13 0v13L4 6z" /></Icon></button>
         <button aria-label="Previous page"><Icon w={8} h={13}><path d="M8 0v13L0 6z" /></Icon></button>
      </PageNav>
      <PageField>
         <input aria-label="Page" defaultValue="3" />
         <Drop $tone="live" aria-label="Page list"><Chevron /></Drop>
      </PageField>
      <PageNav>
         <button aria-label="Next page"><Icon w={8} h={13}><path d="M0 0v13l8-7z" /></Icon></button>
         <button aria-label="Last page"><Icon w={13} h={13}><path d="M10 0h3v13h-3zM0 0v13l9-7z" /></Icon></button>
      </PageNav>
      <Icon w={30} h={20}>
         <path d="M5 17A10 10 0 1 1 19 17l-3-1V9L12 5H8v11z" />
         <path d="M12 5v5h4" fill="none" stroke="#535353" strokeWidth="1.4" />
         <path d="M22 16h6l-3 4z" />
      </Icon>
      <Profile>
         <select aria-label="Preflight profile"><option>[Basic] (working)</option></select>
         <Chevron />
      </Profile>
      <Errors><Dot />No errors<Chevron color={ICON} /></Errors>
      <HScroll>
         <Chevron dir="left" color={MUTED} />
         <HThumb />
         <Chevron dir="right" color={MUTED} />
      </HScroll>
      <StatusEnd>
         <button aria-label="Split layout view">
            <Icon w={25} h={18}><path d="M1 1h23v16H1zM12 1v16" fill="none" stroke={ICON} strokeWidth="2" /></Icon>
         </button>
         <Icon w={16} h={16} color="#757575">
            {[0, 1, 2, 3, 4].map((r) =>
               range(4 - r, 4).map((c) => <rect key={`${r}-${c}`} x={c * 3} y={r * 3} width="2" height="2" />)
            )}
         </Icon>
      </StatusEnd>
   </StatusBar>
);

export default function App() {
   return (
      <Window>
         <GlobalStyle />
         <Defs aria-hidden="true">
            <defs>
               <linearGradient id="fade">
                  <stop offset="0" stopColor="#b8b8b8" />
                  <stop offset="1" stopColor="#505050" />
               </linearGradient>
               <linearGradient id="fadeDown" x1="0" y1="0" x2="0" y2="1">
                  <stop offset="0" stopColor="#535353" />
                  <stop offset="1" stopColor="#b8b8b8" />
               </linearGradient>
            </defs>
         </Defs>
         <TitleBarView />
         <ControlBarView />
         <Main>
            <ToolBoxView />
            <Gutter />
            <Document>
               <TabBar>
                  <Tab>
                     <button aria-label="Close document">
                        <Icon w={11} h={11}><path d="M1 1l9 9M10 1L1 10" stroke="#f0f0f0" strokeWidth="2" /></Icon>
                     </button>
                     *Untitled–4 @ 100% [GPU Preview]
                  </Tab>
               </TabBar>
               <Layout>
                  <Corner>
                     <Icon w={24} h={24}>
                        <path d="M0 7h24M7 0v24" stroke="#b0b0b0" strokeWidth="1.2" strokeDasharray="2 2" />
                     </Icon>
                  </Corner>
                  <HorizontalRuler />
                  <VerticalRuler />
                  <Pasteboard>
                     <Page>
                        <Column />
                        <Column $seam />
                        <Column />
                        <Column />
                        <Column />
                        {coverTexts.map((item) => (
                           <CoverText key={item.text} $at={item.at} $small={item.small}>
                              {item.text}
                           </CoverText>
                        ))}
                     </Page>
                  </Pasteboard>
                  <VScroll>
                     <Chevron dir="up" color="#a0a0a0" />
                     <VThumb />
                     <Chevron color="#a0a0a0" />
                  </VScroll>
               </Layout>
               <StatusBarView />
            </Document>
            <Gutter />
            <Panels>
               <PanelHeader $end><Collapse /></PanelHeader>
               {panelGroups.map((names) => (
                  <PanelGroup key={names[0]}>
                     <PanelGrip />
                     {names.map((name) => (
                        <PanelButton key={name}>
                           <Icon w={34} h={32}>{panelIcons[name]}</Icon>
                           {name}
                        </PanelButton>
                     ))}
                  </PanelGroup>
               ))}
            </Panels>
         </Main>
      </Window>
   );
}

const Window = styled.div`
   display: flex;
   flex-direction: column;
   height: 100vh;
   overflow: hidden;
   background: #535353;
   border-top: 2px solid #363636;
   border-bottom: 2px solid #6e6b6b;
   border-radius: 10px 10px 0 0;
`;

const Defs = styled.svg`
   position: absolute;
   width: 0;
   height: 0;
`;

const TitleBar = styled.header`
   display: flex;
   align-items: center;
   flex: none;
   height: 54px;
   border-bottom: 2px solid #363636;
`;

const Side = styled.div`
   display: flex;
   align-items: center;
   justify-content: ${(p) => (p.$end ? 'flex-end' : 'flex-start')};
   flex: 1 1 0;
   padding: ${(p) => (p.$end ? '0 20px 0 0' : '0 0 0 11px')};
`;

const Lights = styled.div`
   display: flex;
   gap: 12px;
   margin-right: 33px;
`;

const Light = styled.button`
   width: 20px;
   height: 20px;
   border-radius: 50%;
   background: ${(p) => p.$color};
`;

const AppBadge = styled.button`
   width: 26px;
   height: 26px;
   background: ${ICON};
   color: #535353;
   font-weight: 700;
   line-height: 26px;

   & + & {
      margin-left: 31px;
   }
`;

const ZoomSelect = styled.label`
   display: flex;
   align-items: center;
   width: 107px;
   margin: 0 19px 0 28px;
   font-size: 19px;

   select {
      flex: 1;
   }
`;

const TitleRule = styled.span`
   width: ${(p) => (p.$light ? 2 : 1)}px;
   height: 31px;
   background: ${(p) => (p.$light ? '#616161' : '#474747')};
`;

const MenuButton = styled.button`
   display: flex;
   align-items: center;
   justify-content: space-between;
   width: ${(p) => p.$w}px;
   margin: 0 ${(p) => p.$mr || 8}px 0 16px;
`;

const AppTitle = styled.h1`
   margin: 0;
   padding-right: 88px;
   font-size: 20px;
   font-weight: 400;
   line-height: 28px;
   color: #e6e6e6;
`;

const Publish = styled.button`
   display: flex;
   align-items: center;
   gap: 10px;
   height: 42px;
   padding: 0 15px 0 16px;
   margin-right: 9px;
   border: 2px solid #fff;
   border-radius: 21px;
   font-size: 19px;
   color: #fff;
`;

const Workspace = styled.button`
   display: flex;
   align-items: center;
   gap: 20px;
   padding: 0 24px 0 20px;
   font-size: 20px;
   font-weight: 600;
   color: #e6e6e6;
`;

const StockSearch = styled.label`
   display: flex;
   align-items: center;
   gap: 7px;
   width: 209px;
   height: 32px;
   padding: 0 5px;
   margin-left: 9px;
   background: #454545;
   border: 2px solid #6f6f6f;
   border-radius: 4px;

   input {
      flex: 1;
      min-width: 0;
   }

   input::placeholder {
      color: #7d7d7d;
      opacity: 1;
   }
`;

const ControlBar = styled.section`
   display: flex;
   align-items: center;
   flex: none;
   height: 96px;
   padding-right: 9px;
   border-bottom: 2px solid #363636;
`;

const Group = styled.div`
   display: flex;
   align-items: center;
   flex: none;
   height: 75px;
   padding-right: ${(p) => p.$end}px;
   margin-left: ${(p) => (p.$last ? 'auto' : 0)};
   border-right: 1px solid #4a4a4a;
`;

const Stack = styled.div`
   display: grid;
   flex: none;
   grid-template-rows: ${(p) => (p.$solo ? '75px' : '33px 33px')};
   grid-template-columns: 100%;
   row-gap: 9px;
   align-items: center;
   justify-items: center;
   width: ${(p) => p.$w}px;
   margin-left: ${(p) => p.$ml}px;
   color: #fff;
`;

const Inline = styled.div`
   display: flex;
   align-items: center;
   justify-content: ${(p) => (p.$end ? 'flex-end' : 'flex-start')};
   gap: ${(p) => p.$gap}px;
   width: 100%;
   padding-left: ${(p) => p.$pl || 0}px;
   padding-right: ${(p) => (p.$end ? 6 : 0)}px;
`;

const DragDots = styled.span`
   width: 3px;
   height: 31px;
   background: repeating-linear-gradient(#3a3a3a 0 2px, transparent 2px 4px);
`;

const tones = {
   dim: css`
      background: #575757;
      color: #8f8f8f;
   `,
   flat: css`
      background: #5f5f5f;
   `,
   live: css`
      background: #454545;
      border: 2px solid #6f6f6f;
   `,
};

const Field = styled.div`
   display: flex;
   align-items: ${(p) => (p.$center ? 'center' : 'stretch')};
   justify-content: ${(p) => (p.$center ? 'center' : 'flex-start')};
   width: 100%;
   min-width: 0;
   height: 33px;
   border-radius: 4px;
   overflow: hidden;
   ${(p) => tones[p.$tone]}
`;

const Spinner = styled.div`
   display: flex;
   flex-direction: column;
   align-items: center;
   justify-content: space-evenly;
   flex: none;
   width: 27px;
   ${(p) => p.$tone === 'dim' && 'background: #5f5f5f;'}
   ${(p) => p.$tone === 'live' && 'border-right: 2px solid #6f6f6f;'}
`;

const FieldInput = styled.input`
   flex: 1;
   min-width: 0;
   padding: 0 7px 0 8px;
   color: ${(p) => (p.$tone === 'dim' ? '#8f8f8f' : '#f0f0f0')};
`;

const Drop = styled.button`
   display: flex;
   align-items: center;
   justify-content: center;
   flex: none;
   width: 28px;
   ${(p) => p.$tone === 'live' && 'border-left: 2px solid #6f6f6f;'}
`;

const Preview = styled.div`
   display: flex;
   align-items: center;
   justify-content: center;
   flex: 1;
   background: #e3e3e3;
`;

const StyleSelect = styled.select`
   flex: 1;
   padding-left: 12px;
   background: #e3e3e3;
   color: #000;
`;

const Toggle = styled.button`
   display: flex;
   align-items: center;
   justify-content: center;
   width: 35px;
   height: 35px;
   border-radius: 4px;
   background: #2f2f2f;
`;

const Main = styled.main`
   display: flex;
   flex: 1;
   min-height: 0;
   border-bottom: 2px solid #363636;
`;

const Gutter = styled.div`
   flex: none;
   width: 5px;
   background: #444;
   border: solid #363636;
   border-width: 0 2px;
`;

const ToolBox = styled.aside`
   flex: none;
   width: 110px;
`;

const PanelHeader = styled.div`
   display: flex;
   align-items: center;
   justify-content: ${(p) => (p.$end ? 'flex-end' : 'flex-start')};
   height: 20px;
   padding: 0 7px;
   background: #424242;
   border-bottom: 2px solid #363636;
`;

const Grip = styled.span`
   display: block;
   width: 30px;
   height: 6px;
   background: repeating-linear-gradient(90deg, #3a3a3a 0 2px, transparent 2px 3px);
`;

const ToolGrip = styled.div`
   display: flex;
   justify-content: center;
   height: 19px;
   padding-top: 4px;
`;

const ToolGroup = styled.div`
   display: grid;
   grid-template-columns: 48px 48px;
   grid-auto-rows: 38px;
   padding: 3px 6px 2px;
   border-bottom: 1px solid #4a4a4a;
`;

const menuCorner = css`
   &::after {
      content: '';
      position: absolute;
      right: 1px;
      bottom: 1px;
      border: 3px solid ${ICON};
      border-top-color: transparent;
      border-left-color: transparent;
   }
`;

const Tool = styled.button`
   position: relative;
   display: flex;
   align-items: center;
   justify-content: center;
   align-self: center;
   justify-self: center;
   width: 45px;
   height: 35px;
   border-radius: 4px;
   background: ${(p) => (p.$active ? '#2f2f2f' : 'none')};
   ${(p) => p.$menu && menuCorner}
`;

const Swatches = styled.div`
   padding: 6px 0 9px 12px;
`;

const ModeRow = styled.div`
   display: flex;
   align-items: center;
   gap: ${(p) => p.$gap}px;
   height: ${(p) => p.$h}px;
   padding-left: ${(p) => p.$pl}px;
`;

const Mode = styled.button`
   position: relative;
   display: flex;
   align-items: center;
   justify-content: center;
   width: ${(p) => p.$w}px;
   height: ${(p) => p.$h}px;
   border-radius: 4px;
   background: ${(p) => (p.$active ? '#2f2f2f' : 'none')};
   ${(p) => p.$menu && menuCorner}
`;

const ColorChip = styled.button`
   display: block;
   width: 19px;
   height: 19px;
   margin-left: ${(p) => p.$ml || 0}px;
   border: 2px solid #999;
   background: ${(p) => p.$fill};
`;

const Document = styled.div`
   display: flex;
   flex-direction: column;
   flex: 1;
   min-width: 0;
`;

const TabBar = styled.nav`
   display: flex;
   flex: none;
   height: 46px;
   background: #424242;
   border-bottom: 2px solid #363636;
`;

const Tab = styled.div`
   display: flex;
   align-items: center;
   gap: 16px;
   padding: 0 19px 0 24px;
   background: #535353;
   border-right: 2px solid #363636;
   font-weight: 600;
`;

const Layout = styled.div`
   display: grid;
   grid-template-columns: 26px minmax(0, 1fr) 24px;
   grid-template-rows: 26px minmax(0, 1fr);
   flex: 1;
   min-height: 0;
`;

const Corner = styled.div`
   position: relative;
   z-index: 1;
   background: #1f1f1f;
   border: solid #8c8c8c;
   border-width: 0 2px 2px 0;
`;

const HRuler = styled.div`
   background: #1f1f1f;
   border-bottom: 2px solid #8c8c8c;
`;

const VRuler = styled.div`
   background: linear-gradient(
      #575757 19px,
      #1f1f1f 19px,
      #1f1f1f calc(100% - 20px),
      #575757 calc(100% - 20px)
   );
   border-right: 2px solid #8c8c8c;
`;

const Pasteboard = styled.div`
   grid-area: 2 / 2;
   overflow: hidden;
   padding: 213px 58px 0 57px;
   background: linear-gradient(
      #575757 19px,
      #727272 19px,
      #727272 20px,
      #5d5d5d 20px,
      #5d5d5d calc(100% - 20px),
      #727272 calc(100% - 20px),
      #727272 calc(100% - 19px),
      #575757 calc(100% - 19px)
   );
`;

const Page = styled.article`
   position: relative;
   display: grid;
   grid-template-columns: 100fr 148fr 15fr 148fr 100fr;
   aspect-ratio: 511 / 210;
   background: #fff;
   border: 1px solid #9a10ff;
   border-top-color: #e83cf0;
   border-bottom-color: #e83cf0;
   box-shadow: 3px 3px 0 #000;

   &::before {
      content: '';
      position: absolute;
      inset: -21px;
      border: 1px solid #e8566a;
   }
`;

const Column = styled.div`
   border-left: 1px solid ${(p) => (p.$seam ? '#7d6f8a' : '#a31aff')};

   &:first-child {
      border-left: 0;
   }
`;

const CoverText = styled.p`
   position: absolute;
   left: ${(p) => p.$at}%;
   top: 44.9%;
   margin: 0;
   transform: translate(-50%, -50%);
   white-space: nowrap;
   font-family: 'Liberation Sans', Arial, sans-serif;
   font-size: ${(p) => (p.$small ? 22 : 31)}px;
   font-weight: 700;
   line-height: 36px;
   color: #ff2600;
`;

const VScroll = styled.div`
   grid-area: 1 / 3 / 3 / 4;
   display: flex;
   flex-direction: column;
   align-items: center;
   padding: 6px 0 8px;
   background: #4a4a4a;
`;

const VThumb = styled.div`
   flex: 1;
   width: 22px;
   margin: 47px 0 43px;
   border-radius: 11px;
   background: #696969;
`;

const StatusBar = styled.footer`
   display: flex;
   align-items: center;
   flex: none;
   height: 25px;
   padding-left: 19px;
   font-size: 16px;
`;

const PageNav = styled.div`
   display: flex;
   gap: 23px;
`;

const PageField = styled.div`
   display: flex;
   width: 143px;
   height: 25px;
   margin: 0 22px 0 21px;
   background: #454545;
   border: 2px solid #6f6f6f;
   border-radius: 4px;

   input {
      flex: 1;
      min-width: 0;
      padding-left: 6px;
   }

   & + ${PageNav} {
      margin-right: 26px;
   }
`;

const Profile = styled.label`
   display: flex;
   align-items: center;
   justify-content: space-between;
   width: 176px;
   margin: 0 26px 0 22px;

   select {
      width: 140px;
   }
`;

const Errors = styled.button`
   display: flex;
   align-items: center;
   width: 147px;
   gap: 8px;

   svg {
      margin-left: auto;
      margin-right: 8px;
   }
`;

const Dot = styled.span`
   width: 17px;
   height: 17px;
   border-radius: 50%;
   background: #44a340;
`;

const HScroll = styled.div`
   display: flex;
   align-items: center;
   flex: 1;
   height: 25px;
   padding: 0 11px 0 6px;
   background: #4a4a4a;
`;

const HThumb = styled.div`
   flex: 1;
   height: 23px;
   margin: 0 495px 0 505px;
   border-radius: 12px;
   background: #696969;
`;

const StatusEnd = styled.div`
   display: flex;
   align-items: center;
   gap: 10px;
   padding: 0 2px 0 8px;
`;

const Panels = styled.aside`
   flex: none;
   width: 315px;
`;

const PanelGroup = styled.section`
   display: flex;
   flex-direction: column;
   min-height: 66px;
   padding-bottom: 4px;
   border-bottom: 1px solid #363636;
`;

const PanelGrip = styled(Grip)`
   flex: none;
   align-self: center;
   margin: 5px 0 4px;
`;

const PanelButton = styled.button`
   display: flex;
   align-items: center;
   gap: 11px;
   height: 45px;
   padding-left: 15px;
   font-size: 18px;
   font-weight: 600;
   text-align: left;
`;
